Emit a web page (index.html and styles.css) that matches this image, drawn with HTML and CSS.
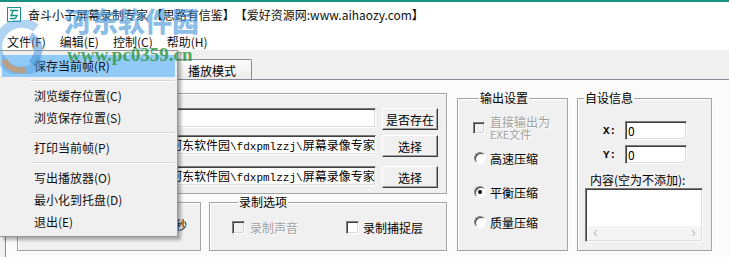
FILE: index.html
```html
<!DOCTYPE html>
<html lang="zh-CN">
<head>
    <meta charset="UTF-8">
    <title>奋斗小子屏幕录制专家</title>
    <link rel="stylesheet" href="styles.css">
</head>
<body>
    <div class="window">
        <div class="titlebar">
            <svg class="app-icon" width="14" height="15" viewBox="0 0 14 15">
                <rect x="0.5" y="0.5" width="13" height="14" fill="#fff" stroke="#169484"/>
                <path d="M3 3.5 H11 M6.5 3.5 L4 8.5 H10 L8.5 11.5 M3 11.5 H8.5" fill="none" stroke="#169484" stroke-width="1.4"/>
            </svg>
            <span class="title">奋斗小子屏幕录制专家 【思路有信鉴】<span class="title-site">【爱好资源网:www.aihaozy.com】</span></span>
        </div>

        <div class="menubar">
            <span class="menu-item">文件(F)</span>
            <span class="menu-item">编辑(E)</span>
            <span class="menu-item">控制(C)</span>
            <span class="menu-item">帮助(H)</span>
        </div>

        <div class="tabs">
            <span class="tab tab-hidden"></span>
            <span class="tab">播放模式</span>
        </div>

        <div class="tab-page">
            <div class="left-col">
                <fieldset class="group group-files">
                    <div class="file-row">
                        <span class="field path-field"></span>
                        <button class="btn">是否存在</button>
                    </div>
                    <div class="file-row row-cache">
                        <span class="field path-field">河东软件园<span class="mono">\fdxpmlzzj\</span>屏幕录像专家源码</span>
                        <button class="btn">选择</button>
                    </div>
                    <div class="file-row row-save">
                        <span class="field path-field">河东软件园<span class="mono">\fdxpmlzzj\</span>屏幕录像专家源码</span>
                        <button class="btn">选择</button>
                    </div>
                </fieldset>

                <div class="bottom-row">
                    <fieldset class="group group-timer">
                        <div class="timer-row">
                            <span class="field spin-field"></span>
                            <span>秒</span>
                        </div>
                    </fieldset>
                    <fieldset class="group group-rec">
                        <legend>录制选项</legend>
                        <div class="rec-row">
                            <span class="check-item disabled"><span class="checkbox"></span>录制声音</span>
                            <span class="check-item layer"><span class="checkbox"></span>录制捕捉层</span>
                        </div>
                    </fieldset>
                </div>
            </div>

            <fieldset class="group group-output">
                <legend>输出设置</legend>
                <div class="check-exe disabled">
                    <span class="checkbox"></span>
                    <span class="check-label">直接输出为<br><span class="exe">EXE文件</span></span>
                </div>
                <div class="radio-row radio-fast"><span class="radio"></span>高速压缩</div>
                <div class="radio-row radio-balance"><span class="radio checked"></span>平衡压缩</div>
                <div class="radio-row radio-quality"><span class="radio"></span>质量压缩</div>
            </fieldset>

            <fieldset class="group group-custom">
                <legend>自设信息</legend>
                <div class="coord-row"><span class="coord-label">X:</span><span class="field coord-field">0</span></div>
                <div class="coord-row row-y"><span class="coord-label">Y:</span><span class="field coord-field">0</span></div>
                <div class="content-label">内容(空为不添加):</div>
                <div class="field memo">
                    <div class="hscroll"><span>&lsaquo;</span><span>&rsaquo;</span></div>
                </div>
            </fieldset>
        </div>

        <!-- open "文件" menu -->
        <div class="dropdown">
            <div class="drop-item active">保存当前帧(R)</div>
            <div class="drop-sep"></div>
            <div class="drop-item">浏览缓存位置(C)</div>
            <div class="drop-item">浏览保存位置(S)</div>
            <div class="drop-sep"></div>
            <div class="drop-item">打印当前帧(P)</div>
            <div class="drop-sep"></div>
            <div class="drop-item">写出播放器(O)</div>
            <div class="drop-item">最小化到托盘(D)</div>
            <div class="drop-item">退出(E)</div>
        </div>

        <!-- site watermark over the screenshot -->
        <svg class="wm-logo" width="56" height="54" viewBox="0 0 56 54">
            <path d="M40 8 A24 24 0 1 0 46 40" fill="none" stroke="rgba(80,160,225,0.45)" stroke-width="9"/>
            <path d="M8 40 Q14 52 30 50" fill="none" stroke="rgba(240,140,50,0.55)" stroke-width="6"/>
            <path d="M34 16 Q50 26 36 44" fill="none" stroke="rgba(60,140,215,0.5)" stroke-width="8"/>
        </svg>
        <span class="wm-name">河东软件园</span>
        <span class="wm-url">www.pc0359.cn</span>
    </div>
</body>
</html>
```

FILE: styles.css
```css
* {
    box-sizing: border-box;
}
body {
    margin: 0;
    width: 729px;
    height: 257px;
    overflow: hidden;
    font-family: "Noto Sans CJK SC", "Liberation Sans", sans-serif;
    font-size: 12px;
    color: #000;
    background-color: #f0f0f0;
}
.window {
    position: relative;
    height: 257px;
    overflow: hidden;
}

/* title + menu */
.titlebar {
    height: 32px;
    border-top: 2px solid #17907f;
    background-color: #fff;
    display: flex;
    align-items: flex-start;
    padding: 5px 0 0 7px;
}
.app-icon {
    flex: none;
}
.title {
    margin-left: 7px;
    font-size: 12px;
    line-height: 16px;
    color: #111;
}
.title-site {
    margin-left: 6px;
}
.menubar {
    height: 18px;
    background-color: #fff;
    display: flex;
    padding-top: 1px;
}
.menu-item {
    padding: 0 7px;
    line-height: 17px;
    color: #111;
}

/* tabs */
.tabs {
    height: 29px;
    display: flex;
    align-items: flex-end;
    padding-left: 103px;
}
.tab {
    width: 75px;
    height: 20px;
    padding: 2px 0 0 10px;
    line-height: 17px;
    border: 1px solid #898c95;
    border-bottom: none;
    border-radius: 2px 2px 0 0;
    background: linear-gradient(#fdfdfd, #ebebeb);
    margin-right: -1px;
}
.tab-page {
    height: 178px;
    margin-left: 5px;
    border-top: 1px solid #898c95;
    border-left: 1px solid #898c95;
    background-color: #fbfbfb;
    display: flex;
    align-items: flex-start;
    padding: 7px 0 0 11px;
}

/* group boxes */
.group {
    margin: 0;
    padding: 0;
    border: 1px solid #a3a3a3;
    box-shadow: 1px 1px 0 #fff, inset 1px 1px 0 #fff;
    background-color: #f0f0f0;
    min-width: 0;
}
.group legend {
    margin-left: 6px;
    padding: 0 1px;
    font-size: 12px;
    line-height: 12px;
}
.left-col {
    width: 430px;
    flex: none;
}
.group-files {
    height: 101px;
    margin-top: 6px;
    padding: 14px 8px 0 0;
}
.file-row {
    display: flex;
    justify-content: flex-end;
    align-items: flex-start;
    gap: 6px;
}
.row-cache {
    margin-top: 5px;
}
.row-save {
    margin-top: 9px;
}

/* sunken edit field */
.field {
    display: block;
    background-color: #fff;
    border: 1px solid;
    border-color: #7a7a7a #fff #fff #7a7a7a;
    box-shadow: inset 1px 1px 0 #404040, inset -1px -1px 0 #dcdcdc;
    white-space: nowrap;
    overflow: hidden;
}
.path-field {
    width: 210px;
    height: 20px;
    padding: 0 3px;
    line-height: 18px;
}
.mono {
    font-family: "Liberation Mono", monospace;
    font-size: 11px;
}
.btn {
    width: 56px;
    height: 22px;
    padding: 0;
    font-family: inherit;
    font-size: 12px;
    background-color: #f0f0f0;
    border: 1px solid;
    border-color: #fff #3c3c3c #3c3c3c #fff;
    box-shadow: inset -1px -1px 0 #a0a0a0;
}

.bottom-row {
    display: flex;
    align-items: flex-start;
    gap: 8px;
    margin-top: 2px;
}
.group-timer {
    width: 184px;
    height: 49px;
    margin-top: 6px;
}
.timer-row {
    display: flex;
    justify-content: flex-end;
    align-items: center;
    gap: 4px;
    height: 16px;
    margin-top: 13px;
    padding-right: 13px;
}
.spin-field {
    width: 36px;
    height: 20px;
}
.group-rec {
    width: 238px;
    height: 55px;
    padding-left: 22px;
}
.rec-row {
    display: flex;
    height: 16px;
    margin-top: 11px;
}
.check-item {
    display: flex;
    align-items: center;
    gap: 5px;
}
.check-item.layer {
    gap: 4px;
    margin-left: 48px;
}
.disabled {
    color: #a0a0a0;
    text-shadow: 1px 1px 0 #fff;
}

/* classic check and radio */
.checkbox {
    width: 13px;
    height: 13px;
    flex: none;
    background-color: #fff;
    border: 1px solid;
    border-color: #808080 #fff #fff #808080;
    box-shadow: inset 1px 1px 0 #404040, inset -1px -1px 0 #d8d8d8;
}
.disabled .checkbox {
    background-color: #f0f0f0;
}
.radio {
    width: 12px;
    height: 12px;
    flex: none;
    border-radius: 50%;
    background-color: #fff;
    border: 1px solid;
    border-color: #808080 #fff #fff #808080;
    box-shadow: inset 1px 1px 0 #404040;
    position: relative;
}
.radio.checked::after {
    content: "";
    position: absolute;
    left: 3px;
    top: 3px;
    width: 4px;
    height: 4px;
    border-radius: 50%;
    background-color: #000;
}

.group-output {
    width: 111px;
    height: 159px;
    margin-top: 5px;
    margin-left: 10px;
    flex: none;
    padding-left: 15px;
}
.check-exe {
    display: flex;
    align-items: center;
    gap: 5px;
    margin-top: 12px;
}
.check-exe .checkbox {
    width: 12px;
    height: 12px;
}
.check-label {
    line-height: 12px;
}
.exe {
    font-size: 11px;
}
.radio-row {
    display: flex;
    align-items: center;
    gap: 4px;
    height: 16px;
    margin-left: 1px;
}
.radio-fast {
    margin-top: 10px;
}
.radio-balance {
    margin-top: 18px;
}
.radio-quality {
    margin-top: 14px;
}

.group-custom {
    width: 135px;
    height: 159px;
    margin-top: 5px;
    margin-left: 9px;
    flex: none;
}
.coord-row {
    display: flex;
    align-items: center;
    margin-top: 17px;
    padding-left: 25px;
}
.coord-row.row-y {
    margin-top: 5px;
}
.coord-label {
    width: 22px;
    font-family: "Liberation Mono", monospace;
    font-size: 11px;
    font-weight: bold;
}
.coord-field {
    width: 62px;
    height: 19px;
    padding-left: 2px;
    line-height: 17px;
}
.content-label {
    margin: 8px 0 0 12px;
    line-height: 16px;
}
.memo {
    width: 118px;
    height: 54px;
    margin-left: 7px;
    position: relative;
}
.hscroll {
    position: absolute;
    left: 2px;
    right: 1px;
    bottom: 1px;
    height: 14px;
    background-color: #f4f4f4;
    display: flex;
    justify-content: space-between;
    padding: 0 5px;
    color: #b8b8b8;
    font-family: "Liberation Sans", sans-serif;
    font-size: 14px;
    line-height: 13px;
}

/* dropdown menu */
.dropdown {
    position: absolute;
    left: 0;
    top: 50px;
    width: 178px;
    padding: 4px 2px 3px 2px;
    background-color: #f0f0f0;
    border: 1px solid #979797;
    border-left: none;
    box-shadow: 3px 3px 3px rgba(0,0,0,0.3);
}
.drop-item {
    height: 22px;
    line-height: 22px;
    padding-left: 32px;
    color: #111;
}
.drop-item.active {
    background-color: #91c9f7;
}
.drop-sep {
    height: 1px;
    margin: 3px 0 3px 28px;
    background-color: #d7d7d7;
    border-bottom: 1px solid #fff;
    box-sizing: content-box;
}

/* watermark */
.wm-logo {
    position: absolute;
    left: -4px;
    top: 20px;
}
.wm-name {
    position: absolute;
    left: 64px;
    top: 6px;
    font-size: 27px;
    line-height: 30px;
    font-weight: 900;
    color: rgba(70,150,215,0.65);
}
.wm-url {
    position: absolute;
    left: 67px;
    top: 44px;
    font-family: "Liberation Serif", serif;
    font-size: 19px;
    line-height: 22px;
    font-weight: bold;
    color: rgba(40,150,60,0.8);
}
```
